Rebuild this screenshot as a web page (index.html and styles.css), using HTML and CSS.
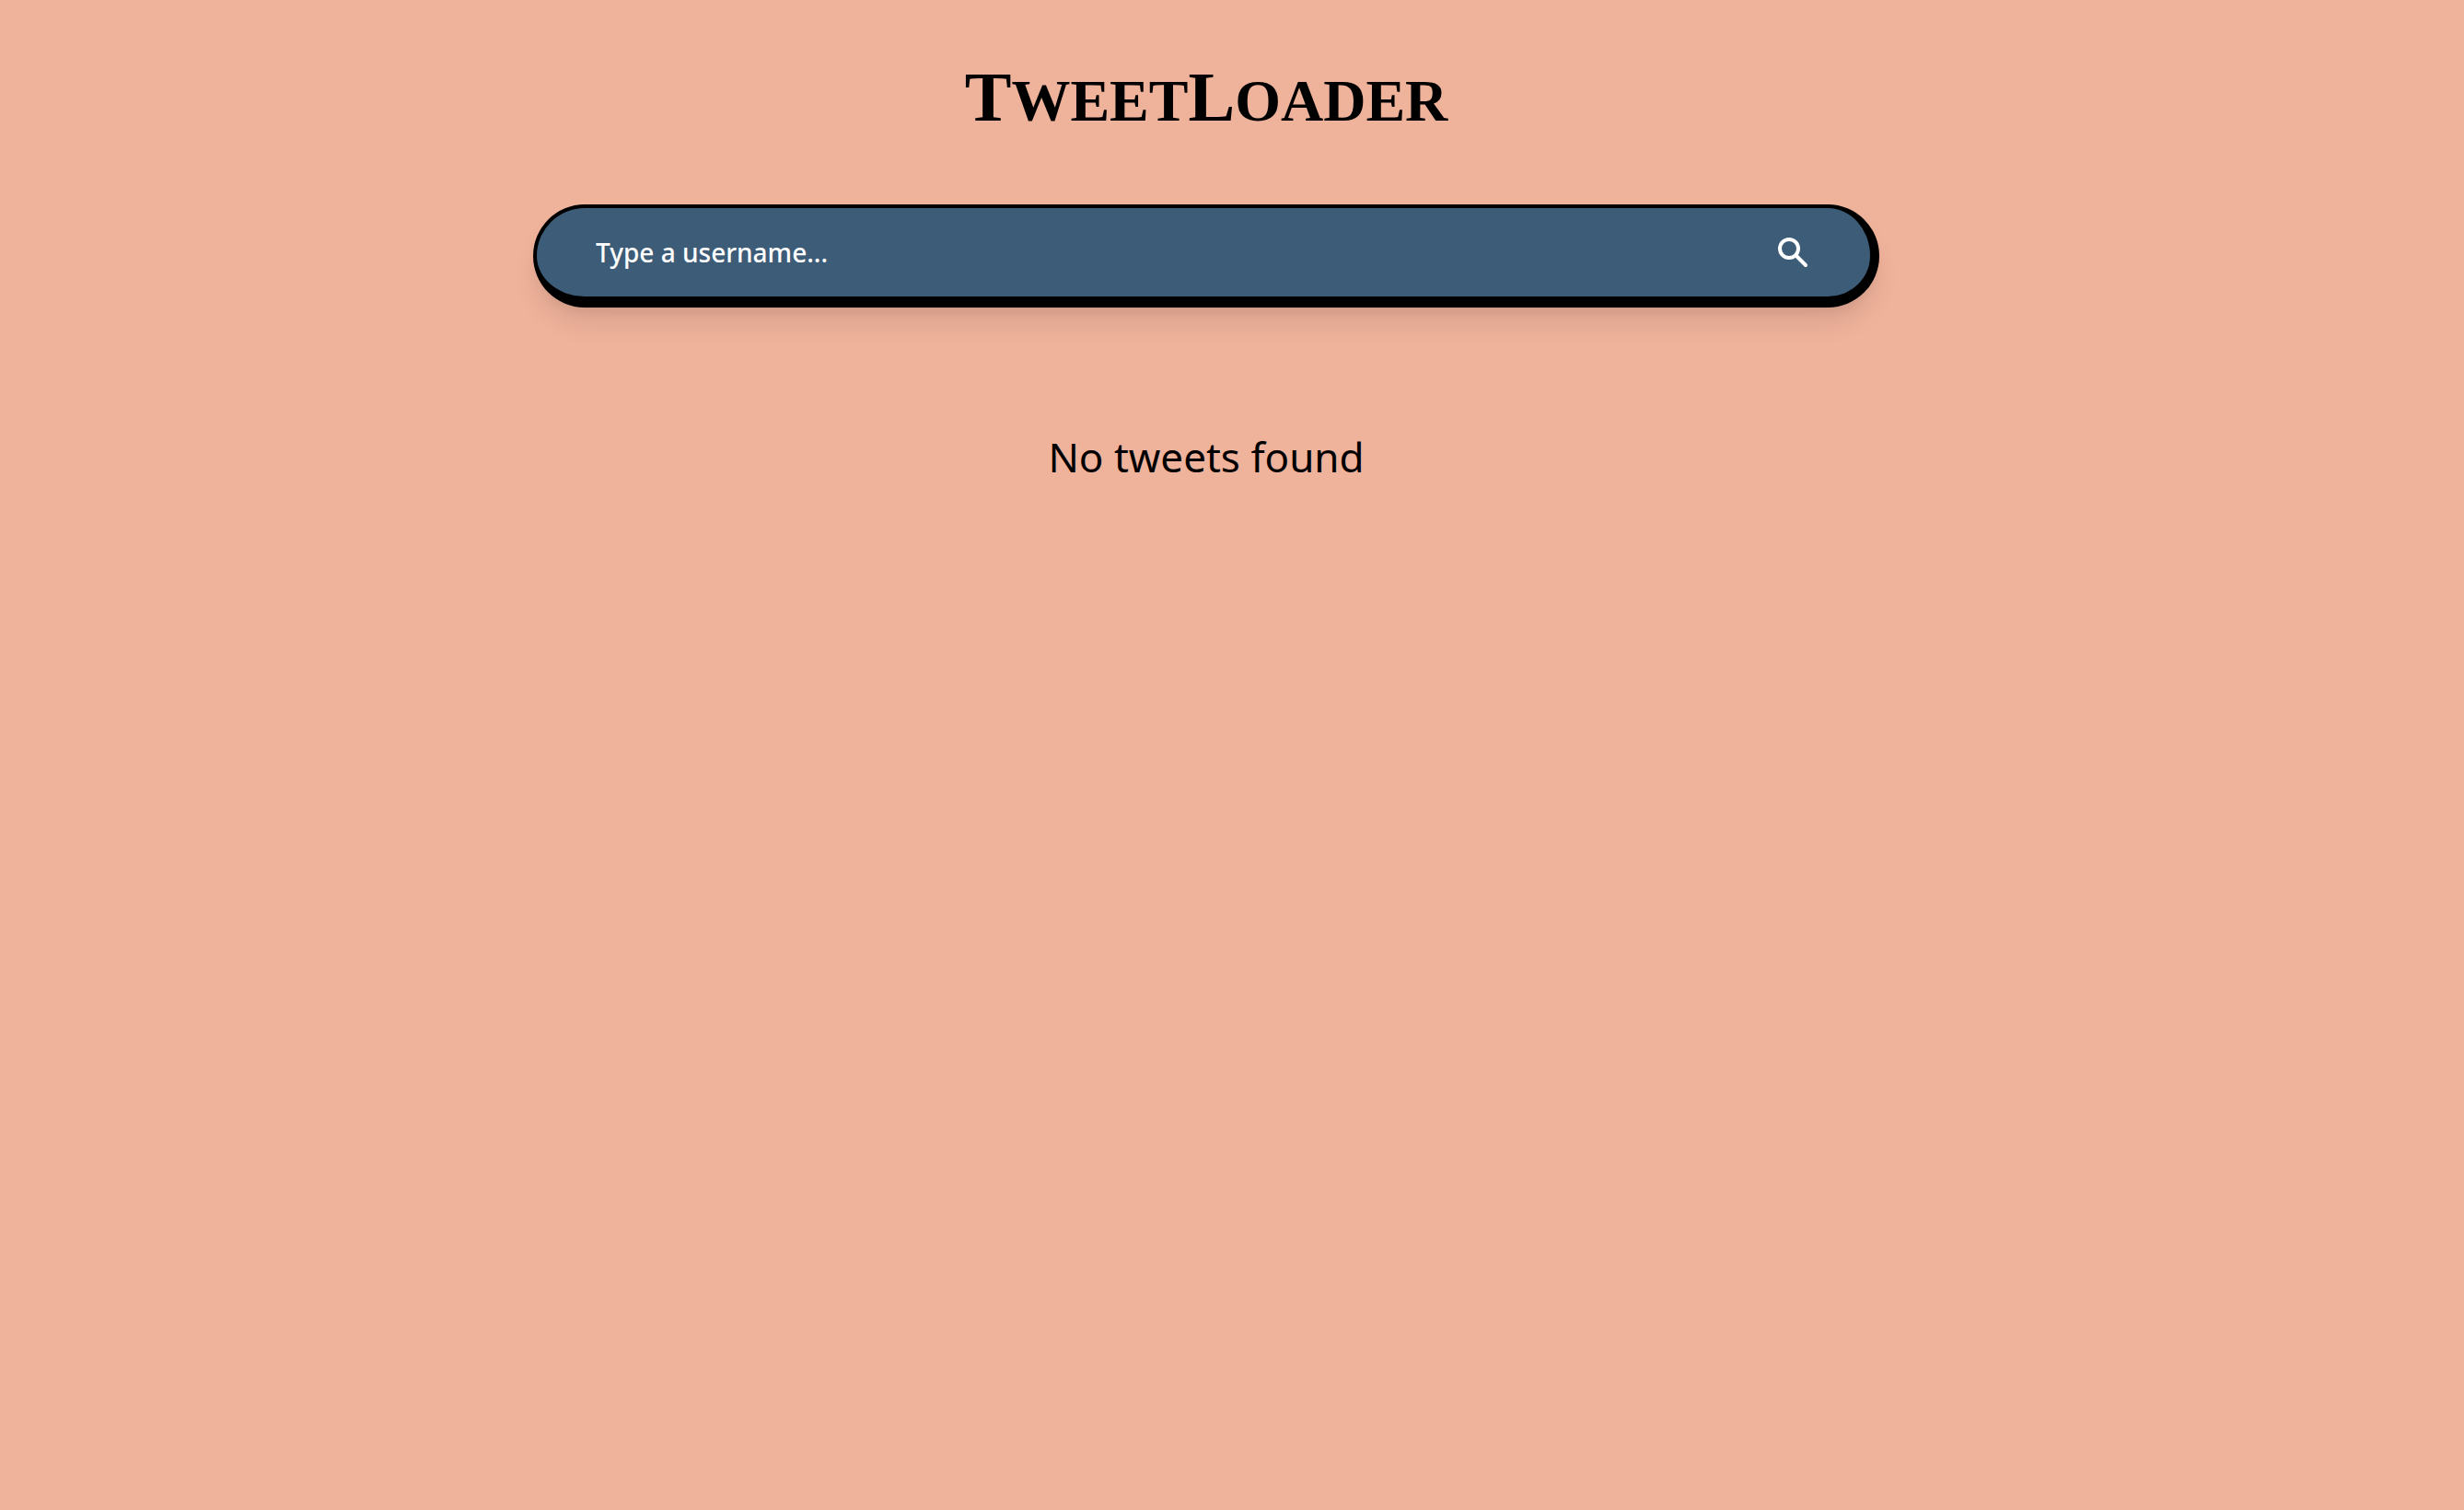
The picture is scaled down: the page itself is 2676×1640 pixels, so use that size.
FILE: index.html
```html
<!DOCTYPE html>
<html lang="en">
<head>
  <meta charset="utf-8">
  <meta name="viewport" content="width=device-width, initial-scale=1">
  <title>TweetLoader</title>
  <link rel="stylesheet" href="styles.css">
</head>
<body>
  <main class="page">
    <h1 class="logo"><span class="logo-cap">T</span>WEET<span class="logo-cap">L</span>OADER</h1>
    <form class="search" role="search">
      <input class="search-input" type="text" aria-label="Username" placeholder="Type a username...">
      <button class="search-button" type="submit" aria-label="Search">
        <svg class="search-icon" viewBox="0 0 40 40" fill="none" stroke="currentColor" stroke-width="4" stroke-linecap="round" aria-hidden="true">
          <circle cx="16" cy="16" r="10"/>
          <path d="M23.5 23.5 34 34"/>
        </svg>
      </button>
    </form>
    <p class="message">No tweets found</p>
  </main>
</body>
</html>
```
FILE: styles.css
```css
* {
  box-sizing: border-box;
}

body {
  margin: 0;
  min-height: 100vh;
  background: #efb29b;
  color: #000;
  font-family: "Noto Sans", "Open Sans", sans-serif;
}

.page {
  display: flex;
  flex-direction: column;
  align-items: center;
  padding: 66px 56px 64px 0;
}

.logo {
  margin: 0;
  font-family: "Liberation Serif", serif;
  font-size: 64px;
  font-weight: 700;
  line-height: 88px;
}

.logo-cap {
  font-size: 76px;
  line-height: 64px;
}

.search {
  display: flex;
  align-items: center;
  width: 100%;
  max-width: 1462px;
  height: 112px;
  margin-top: 68px;
  padding: 0 64px;
  border: solid #000;
  border-width: 4px 10px 12px 4px;
  border-radius: 56px;
  background: #3d5c78;
  box-shadow: 0 20px 30px -6px rgba(0, 0, 0, 0.1), 0 8px 12px -4px rgba(0, 0, 0, 0.05);
}

.search-input {
  flex: 1;
  min-width: 0;
  padding: 0;
  border: 0;
  outline: 0;
  background: transparent;
  color: #fff;
  font: 500 28px/48px "Noto Sans", "Open Sans", sans-serif;
}

.search-input::placeholder {
  color: #fff;
  opacity: 1;
}

.search-button {
  display: flex;
  padding: 0;
  border: 0;
  background: transparent;
  color: #fff;
  cursor: pointer;
}

.search-icon {
  width: 40px;
  height: 40px;
}

.message {
  margin: 130px 0 0;
  font-size: 44px;
  line-height: 64px;
}
```
